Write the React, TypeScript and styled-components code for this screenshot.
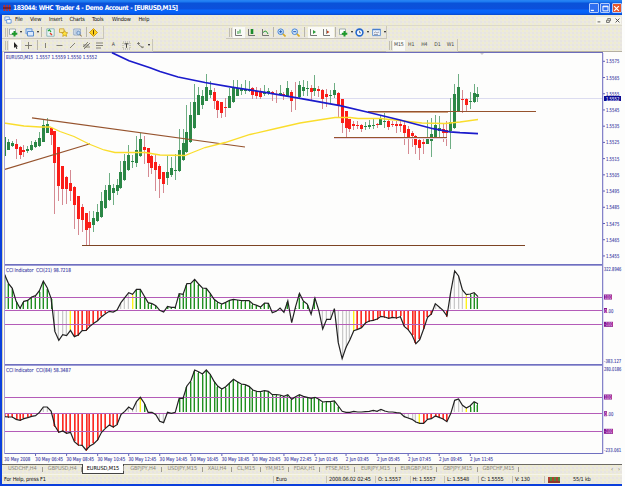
import { Fragment } from 'react'
import type { ReactNode } from 'react'
import styled, { createGlobalStyle } from 'styled-components'

const GlobalStyle = createGlobalStyle`
  * {
    box-sizing: border-box;
  }

  body {
    margin: 0;
    background: #fdfdfc;
    overflow: hidden;
  }
`

const NAVY = '#3c3ca4'
const PURPLE = '#b45cb8'
const MAROON = '#84158c'
const UP = '#2b8746'
const DOWN = '#fb1d18'

/* ---------- data ---------- */

// every bar of the chart is STEP px from the previous one
const FIRST_X = 4.5
const STEP = 3.881
const barX = (i: number) => Math.floor(FIRST_X + STEP * i)

// high, body top, body bottom, low (in thirds of a pixel), d = down bar
const CANDLES = `262 262 317 317 u|266 276 299 300 u|272 280 288 292 u|267 283 298 326 d|288 290 315 326 d|285 301 305 321 d|287 297 303 310 u|272 286 300 303 u|270 277 292 294 u|247 264 287 290 u|207 225 275 277 u|205 221 250 250 u|230 233 255 284 d|243 244 340 493 d|291 291 408 453 d|347 349 416 464 d|378 381 416 463 d|359 399 422 453 d|408 410 465 537 d|438 438 507 555 d|462 471 509 545 d|488 490 540 585 d|482 515 533 585 d|482 504 524 545 u|463 486 514 516 u|426 453 501 504 u|404 420 475 477 u|369 405 449 452 u|403 414 428 464 u|388 405 422 434 u|332 366 413 416 u|313 333 389 392 u|285 315 361 363 u|315 333 337 353 u|257 300 338 352 u|250 267 317 320 u|257 291 300 341 d|293 295 339 380 d|315 317 355 373 d|315 335 361 424 d|343 347 388 443 d|366 367 403 430 d|318 366 383 405 u|322 353 376 380 u|311 360 364 390 u|238 300 362 365 u|238 279 330 333 u|165 246 306 310 u|155 195 277 280 u|101 155 234 237 u|112 135 195 196 u|119 138 165 176 u|72 112 154 154 u|94 121 134 143 u|115 126 154 178 d|150 152 180 205 d|156 157 188 203 d|145 171 175 200 d|115 138 174 175 u|91 113 156 158 u|91 113 137 139 u|103 117 123 134 u|90 119 123 131 u|92 118 122 126 u|112 114 134 146 d|110 123 137 148 d|113 125 141 147 d|105 126 132 137 u|113 124 128 135 u|124 127 132 153 d|120 131 135 158 d|105 129 134 138 u|125 131 137 150 d|92 115 138 139 u|120 125 153 187 d|96 140 145 181 d|92 105 142 145 u|90 111 123 137 u|92 115 118 137 u|106 114 127 150 d|76 114 123 138 u|107 117 124 142 d|117 121 146 176 d|116 132 141 170 d|121 134 138 163 u|98 121 134 145 u|127 129 166 205 d|146 147 219 248 d|183 184 234 260 d|206 208 238 247 d|212 221 229 239 d|213 224 228 236 d|223 225 238 245 d|216 228 232 240 u|211 226 230 236 u|208 225 228 237 u|220 223 226 235 d|198 208 224 224 u|188 212 216 233 u|211 213 230 240 d|212 221 225 231 d|212 223 228 248 d|211 222 228 245 d|217 226 248 284 d|228 236 267 311 d|243 249 258 291 d|255 257 285 311 d|268 270 293 330 d|265 277 282 312 d|210 261 282 282 u|203 252 272 322 u|195 225 262 264 u|198 234 244 260 u|220 238 249 277 d|212 240 249 289 d|144 217 243 298 u|101 131 233 236 u|72 112 185 186 u|120 147 150 190 d|145 147 164 184 d|126 153 156 177 u|101 128 155 158 u|111 133 142 157 u`
  .split('|')
  .map((row) => {
    const [high, top, bottom, low, dir] = row.split(' ')
    return {
      high: 50 + Number(high) / 3,
      top: 50 + Number(top) / 3,
      bottom: 50 + Number(bottom) / 3,
      low: 50 + Number(low) / 3,
      down: dir === 'd',
    }
  })

const CCI_21 = [
  43, 70, 85, 124, 145, 124, 121, 111, 107, 92, 63, 83, 115, 215, 241, 224, 227,
  211, 230, 225, 212, 211, 199, 190, 182, 170, 161, 154, 156, 150, 128, 113, 98,
  103, 88, 88, 108, 128, 131, 137, 151, 156, 139, 142, 142, 101, 103, 71, 70, 58,
  72, 84, 85, 100, 118, 127, 132, 127, 121, 118, 120, 122, 122, 122, 132, 136,
  141, 129, 130, 158, 154, 144, 157, 123, 188, 140, 100, 123, 132, 163, 115, 152,
  207, 178, 178, 146, 248, 296, 262, 239, 212, 208, 203, 189, 183, 181, 177, 169,
  171, 175, 172, 174, 170, 199, 209, 225, 251, 239, 207, 172, 162, 131, 141, 151,
  168, 95, 33, 48, 90, 104, 102, 98, 110,
]

const CCI_84 = [
  470, 471, 471, 478, 481, 476, 473, 469, 467, 457, 441, 441, 453, 498, 517, 513,
  520, 517, 545, 555, 556, 570, 558, 551, 540, 517, 505, 495, 501, 494, 464, 454,
  441, 449, 425, 412, 429, 457, 457, 464, 484, 488, 457, 460, 457, 415, 415, 378,
  363, 330, 335, 342, 330, 343, 364, 379, 387, 380, 369, 358, 365, 372, 374, 379,
  390, 394, 395, 392, 394, 404, 404, 405, 409, 404, 418, 410, 404, 409, 412, 415,
  412, 418, 426, 425, 425, 423, 438, 454, 457, 457, 454, 456, 456, 455, 454, 451,
  454, 448, 453, 456, 456, 458, 459, 470, 474, 478, 486, 490, 490, 478, 476, 468,
  472, 477, 485, 460, 421, 417, 436, 444, 437, 425, 431,
]

// [last bar of the run, colour]
type Run = [number, string]

const GREEN = '#1f8f1f'
const RED = '#fb2a22'
const GRAY = '#c9c9c9'
const YELLOW = '#fdf21a'

const RUNS_21: Run[] = [
  [12, GREEN],
  [16, GRAY],
  [17, YELLOW],
  [29, RED],
  [32, GRAY],
  [33, YELLOW],
  [80, GREEN],
  [89, GRAY],
  [90, YELLOW],
  [110, RED],
  [113, GRAY],
  [114, RED],
  [118, GRAY],
  [119, YELLOW],
  [122, GREEN],
]

const RUNS_84: Run[] = [
  [8, RED],
  [12, GRAY],
  [30, RED],
  [34, GRAY],
  [35, YELLOW],
  [36, GREEN],
  [44, GRAY],
  [87, GREEN],
  [106, GRAY],
  [107, YELLOW],
  [114, RED],
  [118, GRAY],
  [119, YELLOW],
  [122, GREEN],
]

const PRICES = [
  '1.5575', '1.5565', '1.5555', '1.5545', '1.5535', '1.5525', '1.5515',
  '1.5505', '1.5495', '1.5485', '1.5475', '1.5465', '1.5455',
]

const TIMES = [
  '30 May 2008', '30 May 06:45', '30 May 08:45', '30 May 10:45',
  '30 May 12:45', '30 May 14:45', '30 May 16:45', '30 May 18:45',
  '30 May 20:45', '30 May 22:45', '2 Jun 01:45', '2 Jun 03:45',
  '2 Jun 05:45', '2 Jun 07:45', '2 Jun 09:45', '2 Jun 11:45',
]

const MENU = [
  { label: 'File', width: 15 },
  { label: 'View', width: 19 },
  { label: 'Insert', width: 20.5 },
  { label: 'Charts', width: 22.5 },
  { label: 'Tools', width: 20 },
  { label: 'Window', width: 26.5 },
  { label: 'Help', width: 20 },
]

const TABS = [
  { label: 'USDCHF,H4', width: 40.5 },
  { label: 'GBPUSD,H4', width: 39.5 },
  { label: 'EURUSD,M15', width: 42, active: true },
  { label: 'GBPJPY,H4', width: 38 },
  { label: 'USDJPY,M15', width: 40.5 },
  { label: 'XAU,H4', width: 29 },
  { label: 'CL,M15', width: 29 },
  { label: 'YM,M15', width: 28.5 },
  { label: 'FDAX,H1', width: 31 },
  { label: 'FTSE,M15', width: 35 },
  { label: 'EURJPY,M15', width: 41 },
  { label: 'EURGBP,M15', width: 41 },
  { label: 'GBPJPY,M15', width: 41 },
  { label: 'GBPCHF,M15', width: 41 },
]

const STATUS = [
  { label: 'For Help, press F1', width: 272 },
  { label: 'Euro', width: 53 },
  { label: '2008.06.02 02:45', width: 49 },
  { label: 'O: 1.5557', width: 34.5 },
  { label: 'H: 1.5557', width: 34.5 },
  { label: 'L: 1.5548', width: 34 },
  { label: 'C: 1.5555', width: 34 },
  { label: 'V: 130', width: 32 },
]

/* ---------- window ---------- */

const Window = styled.div`
  display: flex;
  flex-direction: column;
  width: 622px;
  height: 486px;
  border-left: 2px solid #0b3fdc;
  border-bottom: 2px solid #0b3fdc;
  background: #fdfdfc;
  font-family: 'DejaVu Sans Condensed', 'DejaVu Sans', sans-serif;
  font-stretch: condensed;
  font-size: 5.6px;
  line-height: 1;
  color: #222;
  white-space: pre;
`

const TitleBar = styled.header`
  display: flex;
  align-items: center;
  height: 15px;
  flex: none;
  margin-left: -2px;
  padding: 1px 0.5px 0 3px;
  background: linear-gradient(
    #2a86f4 0,
    #1a78f0 2px,
    #0a52d8 3px,
    #0c50dc 9px,
    #0866fa 10px,
    #0460f8 13px,
    #0a48c8 15px
  );
`

const Title = styled.h1`
  flex: 1;
  margin: 0 0 0 2px;
  font-size: 6.6px;
  font-weight: 700;
  letter-spacing: -0.5px;
  word-spacing: 0.5px;
  color: #fff;
`

const CaptionButton = styled.button<{ $color: string }>`
  width: 10px;
  height: 10px;
  margin-left: 1.5px;
  padding: 0;
  border: 1px solid #b4cdfa;
  border-radius: 1px;
  background: ${(props) => props.$color};
  display: flex;
  align-items: center;
  justify-content: center;
`

const dither = `
  background-color: #ebe9df;
  background-image:
    radial-gradient(circle at 1px 1px, rgba(252, 246, 150, 0.7) 0.5px, transparent 0.8px),
    radial-gradient(circle at 3px 3px, rgba(222, 216, 228, 0.8) 0.5px, transparent 0.8px);
  background-size: 4px 4px;
`

const MenuBar = styled.nav`
  display: flex;
  align-items: center;
  height: 10px;
  flex: none;
  padding: 0 1px 0 2px;
  ${dither}
`

const MenuItem = styled.span<{ $width: number }>`
  width: ${(props) => props.$width}px;
  letter-spacing: -0.2px;
  color: #111;
`

const MenuIcon = styled.span`
  display: flex;
  width: 11px;
`

const Spacer = styled.span`
  flex: 1;
`

const MdiButtons = styled.span`
  display: flex;
  gap: 4px;
  padding: 1px;
  background: #f7f6ee;
`

const ToolArea = styled.div`
  flex: none;
  border-top: 1px solid #dcd9cc;
  border-bottom: 1px solid #b5b0a2;
  height: 27px;
  ${dither}
`

const ToolRow = styled.div`
  display: flex;
  height: 13px;
`

const ToolGroup = styled.div<{ $width: number; $left?: number }>`
  display: flex;
  align-items: center;
  width: ${(props) => props.$width}px;
  margin-left: ${(props) => props.$left ?? 0}px;
  border: solid #c9c6ba;
  border-width: 0 1px 1px 0;
`

const Grip = styled.span`
  width: 3px;
  height: 9px;
  margin: 0 1px 0 3px;
  border: solid #c0bdb0;
  border-width: 0 1px;
`

const Tool = styled.span<{ $width?: number; $pressed?: boolean }>`
  display: flex;
  align-items: center;
  justify-content: center;
  width: ${(props) => props.$width ?? 13.5}px;
  height: 11px;
  font-size: 5.2px;
  letter-spacing: -0.2px;
  color: #444;
  background: ${(props) => (props.$pressed ? '#fafaf6' : 'transparent')};
`

const Rule = styled.span`
  width: 1px;
  height: 10px;
  background: #b9b6aa;
`

const DropArrow = styled.span`
  border: solid transparent;
  border-width: 2px 1.5px 0;
  border-top-color: #111;
`

const Charts = styled.main`
  display: flex;
  flex-direction: column;
  flex: none;
  padding-left: 2px;
  background: #fdfdfc;
  box-shadow: inset 1px 0 #d2cdb4;

  svg {
    display: block;
  }
`

const TabBar = styled.div`
  display: flex;
  height: 10px;
  flex: none;
  border-top: 1px solid #6c6a64;
  ${dither}
`

const Tab = styled.span<{ $width: number; $active?: boolean }>`
  display: flex;
  position: relative;
  align-items: center;
  justify-content: center;
  width: ${(props) => props.$width}px;
  height: ${(props) => (props.$active ? 10 : 8)}px;
  margin-top: ${(props) => (props.$active ? -1 : 0)}px;
  letter-spacing: -0.1px;
  color: ${(props) => (props.$active ? '#000' : '#8c897e')};
  background: ${(props) => (props.$active ? '#fff' : 'transparent')};
  border: solid ${(props) => (props.$active ? '#444' : 'transparent')};
  border-width: 0 1px 1px;

  &::after {
    content: '';
    position: absolute;
    right: -1px;
    top: 2px;
    height: 5px;
    border-right: 1px solid #a19e92;
  }
`

const TabArrows = styled.span`
  display: flex;
  align-items: center;
  gap: 5px;
  margin-left: auto;
  padding-right: 2px;
  color: #777;
`

const StatusBar = styled.footer`
  display: flex;
  align-items: center;
  flex: 1;
  border-top: 1px solid #f6f4ea;
  ${dither}
`

const StatusCell = styled.span<{ $width: number }>`
  width: ${(props) => props.$width}px;
  padding-left: 2px;
  line-height: 7px;
  letter-spacing: -0.2px;
  color: #111;
  border-right: 1px solid #c4c1b4;
`

const Traffic = styled.span`
  margin-left: 13px;
  letter-spacing: -0.2px;
`

const Signal = styled.span`
  width: 12px;
  height: 6px;
  margin-left: 3px;
  background: repeating-linear-gradient(90deg, #b04030 0 2px, #4e8a3c 2px 4px);
  border-bottom: 2px solid #8c3a2c;
`

/* ---------- icons ---------- */

function Glyph({ children, size = 9 }: { children: ReactNode; size?: number }) {
  return (
    <svg width={size} height={size} viewBox="0 0 9 9" fill="none">
      {children}
    </svg>
  )
}

const NewChartIcon = () => (
  <Glyph>
    <path d="M.5 1h6v5.500h-6z" fill="#fff" stroke="#8a9a9a" strokeWidth=".8" />
    <path d="M5.500 3v5.500M2.800 5.800h5.500" stroke="#1d9a2a" strokeWidth="2" />
  </Glyph>
)

const ProfilesIcon = () => (
  <Glyph>
    <path d="M1 .8h6v5H1z" fill="#cfe2fa" stroke="#6a9ad8" />
    <path d="M2.500 3.500h6v4.500h-6z" fill="#dceafc" stroke="#5a8ccc" />
  </Glyph>
)

const MarketIcon = () => (
  <Glyph>
    <path d="M.8 .8h7.400v7.400H.8z" fill="#e8f6f4" stroke="#7faab0" strokeWidth=".8" />
    <path d="m2 3 1.500-1.200L5 4" stroke="#20a038" strokeWidth="1.200" />
    <path d="m4 5 2 2" stroke="#e04030" strokeWidth="1.500" />
  </Glyph>
)

const NavigatorIcon = () => (
  <Glyph>
    <path d="M.5 4.500V.8h4.500v3.700z" fill="#fbe992" stroke="#c8a030" strokeWidth=".8" />
    <path d="m5.700 2.500 1 1.900 2.100.3-1.500 1.500.4 2.200-2-1-2 1 .4-2.200L2.600 4.700l2.100-.3z" fill="#ffe23c" stroke="#b88c10" strokeWidth=".6" />
  </Glyph>
)

const TerminalIcon = () => (
  <Glyph>
    <path d="M.8 1h6.500v6H.8z" fill="#e0ecf8" stroke="#8098b8" strokeWidth=".8" />
    <path d="M2 3h4M2 5h3" stroke="#7c94b4" strokeWidth=".7" />
    <circle cx="5.500" cy="5" r="1.700" fill="#bcd8f4" stroke="#5880b0" strokeWidth=".7" />
    <path d="m7 6.500 1.700 2" stroke="#806030" />
  </Glyph>
)

const OrderIcon = () => (
  <Glyph>
    <path d="M4.500.5 8.500 4.500l-4 4-4-4z" fill="#ffd21c" stroke="#c08a00" strokeWidth=".8" />
    <path d="M4.500 2.200v4.300" stroke="#5c4200" />
  </Glyph>
)

const AxisIcon = ({ children }: { children: ReactNode }) => (
  <Glyph>
    <path d="M1.500 1v6.500H8" stroke="#666" strokeWidth=".9" />
    {children}
  </Glyph>
)

const ZoomIcon = ({ plus }: { plus?: boolean }) => (
  <Glyph>
    <path d="m5.500 5.500 3 3" stroke="#d8a820" strokeWidth="1.600" />
    <circle cx="3.700" cy="3.700" r="2.800" fill="#d4e8fc" stroke="#4a88d4" />
    <path d={plus ? 'M2.200 3.700h3M3.700 2.200v3' : 'M2.200 3.700h3'} stroke="#2058b0" />
  </Glyph>
)

const ClockIcon = () => (
  <Glyph>
    <circle cx="4.500" cy="4.500" r="3.400" fill="#eef6ff" stroke="#2668cc" strokeWidth="1.600" />
    <path d="M4.500 2.800v2h1.500" stroke="#444" strokeWidth=".7" />
  </Glyph>
)

const TemplateIcon = () => (
  <Glyph>
    <path d="M.6 1.200h7.800v6.400H.6z" fill="#eef4fc" stroke="#6c98d0" />
    <path d="M.6 1.600h7.800" stroke="#4a80cc" strokeWidth="1.200" />
    <path d="m2 5 1.500-1 1.500 1 2-1M2 6.500h4" stroke="#667" strokeWidth=".6" />
  </Glyph>
)

const CursorIcon = () => (
  <Glyph>
    <path d="M3 1v6l1.400-1.200L5.400 8l1-.5-1-2H7z" fill="#222" />
  </Glyph>
)

const LineIcon = ({ d }: { d: string }) => (
  <Glyph>
    <path d={d} stroke="#77756c" strokeWidth=".9" />
  </Glyph>
)

/* ---------- chart pieces ---------- */

type LabelProps = {
  x: number
  y: number
  width: number
  fill?: string
  children: string
}

// y is the vertical centre of the capitals
function Label({ x, y, width, fill = NAVY, children }: LabelProps) {
  return (
    <text
      x={x}
      y={y + 2}
      fontSize="5.4"
      fill={fill}
      stroke={fill}
      strokeWidth=".1"
      textLength={width}
      lengthAdjust="spacingAndGlyphs"
      xmlSpace="preserve"
    >
      {children}
    </text>
  )
}

function Frame({ top, bottom }: { top: number; bottom: number }) {
  return (
    <g shapeRendering="crispEdges">
      <path d={`M4.500 ${top}V${bottom}`} stroke="#a5a3dc" />
      <path d={`M602.500 ${top}V${bottom}`} stroke="#8583c8" />
      <path d={`M603.500 ${top}V${bottom}`} stroke="#dddcf2" />
    </g>
  )
}

function PricePanel() {
  return (
    <svg width="618" height="213" viewBox="4 52 618 213">
      <g shapeRendering="crispEdges">
        <path d="M4 52.500H603" stroke="#6c6cbc" />
        <path d="M4 98.500H602" stroke="#dcdcf0" />
        <path d="M4 264.500H603" stroke="#6f6fbf" />
      </g>
      <path d="M480 53h4l-2 2z" fill="#ccc" />
      <g shapeRendering="crispEdges">
        {CANDLES.map((c, i) => {
          const x = barX(i)
          return (
            <Fragment key={i}>
              <rect
                x={x}
                y={c.high}
                width="1"
                height={c.low - c.high}
                fill={c.down ? '#d58a92' : '#6fae84'}
              />
              <rect
                x={x - 1}
                y={c.top}
                width="3"
                height={Math.max(1, c.bottom - c.top)}
                fill={c.down ? DOWN : UP}
              />
            </Fragment>
          )
        })}
      </g>
      <g fill="none" stroke="#96532d" strokeWidth="1.200">
        <path d="M32 117.800 245 147" />
        <path d="M4 169.700 90 143.800" />
      </g>
      <g fill="none" shapeRendering="crispEdges">
        <path d="M368 112.500h80" stroke="#cfa283" />
        <path d="M368 111.500h168" stroke="#96532d" />
        <path d="M334 137.500h113" stroke="#96532d" />
        <path d="M334 138.500h113" stroke="#e6cfe0" />
        <path d="M82 245.500h443" stroke="#7d4424" />
      </g>
      <path
        d="M4 123 24 126 40 127 50 127 60 131.500 74 136.500 89 144 104 150 115 152.500 145 152.500 160 155 185 155.500 190 153.500 205 147.500 225 142.500 250 134.500 276 128.500 300 123 322 119.500 335 117.500 350 117.500 358 118.500 380 118.500 400 120.500 422 123 445 123.500 460 122 478 119.500"
        fill="none"
        stroke="#fadd2c"
        strokeWidth="1.300"
      />
      <path
        d="M112 52.700 129 60.700 150 67.700 160 71.500 178 77 205 82.500 233 87.300 265 92.300 300 98.300 340 105.700 367 112 400 120 433 128.700 450 131.800 460 132.700 478 133.700"
        fill="none"
        stroke="#1b1bcb"
        strokeWidth="1.700"
      />
      <Frame top={53} bottom={265} />
      {PRICES.map((price, i) => (
        <Fragment key={price}>
          <path d={`M603 ${61.300 + i * 16.220}h2`} stroke={NAVY} strokeWidth=".8" />
          <Label x={606} y={61.300 + i * 16.220} width={13.300}>
            {price}
          </Label>
        </Fragment>
      ))}
      <rect x="604" y="96" width="17" height="5" fill="#0c0c94" />
      <Label x={606} y={98.500} width={13.300} fill="#e6e6ff">
        1.5552
      </Label>
      <Label x={6} y={56.700} width={91}>
        {'EURUSD,M15  1.5557 1.5559 1.5550 1.5552'}
      </Label>
    </svg>
  )
}

type CciPanelProps = {
  top: number
  height: number
  title: string
  values: number[]
  runs: Run[]
  // +100, 0 and -100
  levels: [number, number, number]
  max: string
  min: string
}

function CciPanel({ top, height, title, values, runs, levels, max, min }: CciPanelProps) {
  const bottom = top + height
  const zero = levels[1]
  const ys = values.map((v) => 260 + v / 3)
  const colorOf = (i: number) => runs.find(([last]) => i <= last)![1]
  const points = ys.map((y, i) => `${FIRST_X + STEP * i},${y}`).join(' ')

  return (
    <svg width="618" height={height} viewBox={`4 ${top} 618 ${height}`}>
      <g shapeRendering="crispEdges">
        <path d={`M4 ${top + 0.5}H603`} stroke="#9c9cd6" />
        <path d={`M4 ${bottom - 0.5}H603`} stroke="#7070c0" />
        {ys.map((y, i) => {
          const above = y < zero
          const color = colorOf(i)
          // short bars near zero are not painted
          if (Math.abs(y - zero) < 2) return null
          if (color === GREEN && !above) return null
          return (
            <Fragment key={i}>
              <rect
                x={barX(i)}
                y={above ? y : zero + 0.5}
                width="1"
                height={above ? zero - 1.5 - y : y - zero}
                fill={color}
              />
              <rect
                x={barX(i) + (i % 3 === 0 ? 1 : -1)}
                y={above ? y + 1 : zero + 0.5}
                width="1"
                height={Math.max(0, above ? zero - 2.5 - y : y - zero - 1)}
                fill={color}
                opacity={color === RED ? 0.65 : color === GRAY ? 0.25 : 0.4}
              />
            </Fragment>
          )
        })}
        {levels.map((y) => (
          <path key={y} d={`M4 ${Math.floor(y) + 0.5}H603`} stroke={PURPLE} />
        ))}
      </g>
      <polyline points={points} fill="none" stroke="#222" strokeWidth="1.200" />
      <Frame top={top} bottom={bottom} />
      <Label x={6} y={top + 5.300} width={65}>
        {title}
      </Label>
      <Label x={604} y={top + 4} width={17.300}>
        {max}
      </Label>
      <rect x="604" y={levels[0] - 2.500} width="8" height="5" fill={MAROON} />
      <Label x={604.500} y={levels[0]} width={7} fill="#e8b8ea">
        100
      </Label>
      <rect x="604" y={zero - 2.500} width="3" height="5" fill={MAROON} />
      <Label x={604.300} y={zero} width={2.600} fill="#e8b8ea">
        0
      </Label>
      <Label x={607.300} y={zero} width={6}>
        .00
      </Label>
      <rect x="604" y={levels[2] - 2.500} width="9" height="5" fill={MAROON} />
      <Label x={604.500} y={levels[2]} width={8} fill="#e8b8ea">
        -100
      </Label>
      <Label x={604} y={bottom - 3.800} width={17.300}>
        {min}
      </Label>
    </svg>
  )
}

function TimeAxis() {
  return (
    <svg width="618" height="10" viewBox="4 454 618 10">
      {TIMES.map((time, i) => (
        <Fragment key={time}>
          {i > 0 && <path d={`M${4.500 + i * 31.050} 454v2`} stroke={NAVY} strokeWidth=".8" />}
          <Label
            x={4.300 + i * 31.050}
            y={459.200}
            width={time.startsWith('2') ? 23 : i === 0 ? 26 : 27.800}
          >
            {time}
          </Label>
        </Fragment>
      ))}
    </svg>
  )
}

/* ---------- app ---------- */

function Toolbars() {
  return (
    <ToolArea>
      <ToolRow>
        <ToolGroup $width={102}>
          <Grip />
          <Tool $width={9}><NewChartIcon /></Tool>
          <Tool $width={5}><DropArrow /></Tool>
          <Tool $width={13}><ProfilesIcon /></Tool>
          <Tool $width={4}><DropArrow /></Tool>
          <Tool $width={3}><Rule /></Tool>
          <Tool $width={14}><MarketIcon /></Tool>
          <Tool $width={13}><NavigatorIcon /></Tool>
          <Tool $width={14}><TerminalIcon /></Tool>
          <Tool $width={5}><Rule /></Tool>
          <Tool $width={9}><OrderIcon /></Tool>
        </ToolGroup>
        <ToolGroup $width={161} $left={122}>
          <Grip />
          <Tool $width={12} $pressed>
            <AxisIcon><path d="M4 3v3M6 1.500v4" stroke="#2a9a3a" /></AxisIcon>
          </Tool>
          <Tool $width={14}>
            <AxisIcon><path d="M5 1v5" stroke="#1c8c2c" strokeWidth="2.600" /></AxisIcon>
          </Tool>
          <Tool>
            <AxisIcon><path d="m2 4.500 2-1.500 1.500.500L7 6" stroke="#2a9a3a" /></AxisIcon>
          </Tool>
          <Tool $width={3}><Rule /></Tool>
          <Tool><ZoomIcon plus /></Tool>
          <Tool><ZoomIcon /></Tool>
          <Tool $width={6}><Rule /></Tool>
          <Tool $width={12} $pressed>
            <AxisIcon><path d="m4 2 3 2-3 2z" fill="#2a9a3a" /></AxisIcon>
          </Tool>
          <Tool $width={14} $pressed>
            <AxisIcon>
              <path d="M4.500 1v5" stroke="#666" strokeWidth=".7" />
              <path d="m5 2.500 2.500 1.500L5 5.500z" fill="#c04020" />
            </AxisIcon>
          </Tool>
          <Tool $width={3}><Rule /></Tool>
          <Tool $width={14}><NewChartIcon /></Tool>
          <Tool $width={3}><DropArrow /></Tool>
          <Tool $width={13}><ClockIcon /></Tool>
          <Tool $width={3}><DropArrow /></Tool>
          <Tool $width={14}><TemplateIcon /></Tool>
          <Tool $width={3}><DropArrow /></Tool>
        </ToolGroup>
      </ToolRow>
      <ToolRow>
        <ToolGroup $width={151}>
          <Grip />
          <Tool $width={12} $pressed><CursorIcon /></Tool>
          <Tool $width={14}><LineIcon d="M4.500 1v7M1 4.500h7" /></Tool>
          <Tool $width={4}><Rule /></Tool>
          <Tool><LineIcon d="M4.500 2v5" /></Tool>
          <Tool><LineIcon d="M1.500 4.500h6" /></Tool>
          <Tool><LineIcon d="m2 7 5-5" /></Tool>
          <Tool><LineIcon d="m1 6 5-5M2 8l6-6M1 4h6M2 6h6" /></Tool>
          <Tool><LineIcon d="M1 2h7M1 4.500h7M1 7h5" /></Tool>
          <Tool>A</Tool>
          <Tool>
            <Glyph>
              <path d="M1 1h7v7H1z" stroke="#888" strokeWidth=".7" strokeDasharray="1 1" />
              <path d="M2.500 2.800h4M4.500 2.800v4" stroke="#444" />
            </Glyph>
          </Tool>
          <Tool><LineIcon d="M1 2.500h3M2.500 1v3M3 4l4 3M5 6h3" /></Tool>
          <Tool $width={3}><DropArrow /></Tool>
        </ToolGroup>
        <ToolGroup $width={72} $left={233}>
          <Grip />
          <Tool $width={12} $pressed>M15</Tool>
          <Tool>H1</Tool>
          <Tool>H4</Tool>
          <Tool>D1</Tool>
          <Tool>W1</Tool>
        </ToolGroup>
      </ToolRow>
    </ToolArea>
  )
}

function App() {
  return (
    <>
      <GlobalStyle />
      <Window>
        <TitleBar>
          <Glyph size={8}>
            <path d="M1.500 1v7M4.500 1v7M7.500 1v7" stroke="#c03028" strokeWidth="1.800" />
            <path d="M0 4.500h9" stroke="#701818" strokeWidth="1.500" />
          </Glyph>
          <Title>183044: WHC Trader 4 - Demo Account - [EURUSD,M15]</Title>
          <CaptionButton $color="#2f6ff0">
            <Glyph size={7}><path d="M1 7h4" stroke="#fff" strokeWidth="1.600" /></Glyph>
          </CaptionButton>
          <CaptionButton $color="#2f6ff0">
            <Glyph size={7}><path d="M1.200 1.500h6.500v6H1.200zM1 2.200h7" stroke="#fff" strokeWidth="1.200" /></Glyph>
          </CaptionButton>
          <CaptionButton $color="#e4552c">
            <Glyph size={7}><path d="m1.500 1.500 6 6M7.500 1.500l-6 6" stroke="#fff" strokeWidth="1.600" /></Glyph>
          </CaptionButton>
        </TitleBar>

        <MenuBar>
          <MenuIcon>
            <Glyph size={8}>
              <path d="M1 1h5v4H1z" fill="#e8f2ff" stroke="#6c9ce0" />
              <path d="M3 4h5v4H3z" fill="#fff" stroke="#5a90dc" />
            </Glyph>
          </MenuIcon>
          {MENU.map((item) => (
            <MenuItem key={item.label} $width={item.width}>
              {item.label}
            </MenuItem>
          ))}
          <Spacer />
          <MdiButtons>
            <Glyph size={5}><path d="M1 7h5" stroke="#444" strokeWidth="1.500" /></Glyph>
            <Glyph size={5}><path d="M1 4h5v4H1zM3 3V1h5v4H7" stroke="#444" strokeWidth="1.300" /></Glyph>
            <Glyph size={5}><path d="m1 1 7 7M8 1 1 8" stroke="#444" strokeWidth="1.600" /></Glyph>
          </MdiButtons>
        </MenuBar>

        <Toolbars />

        <Charts>
          <PricePanel />
          <CciPanel
            top={265}
            height={100}
            title={'CCI Indicator  CCI(21) 98.7218'}
            values={CCI_21}
            runs={RUNS_21}
            levels={[297, 310.500, 324.300]}
            max="322.8946"
            min="-383.127"
          />
          <CciPanel
            top={365}
            height={89}
            title={'CCI Indicator  CCI(84) 58.3487'}
            values={CCI_84}
            runs={RUNS_84}
            levels={[397, 413.700, 431.300]}
            max="280.0186"
            min="-233.061"
          />
          <TimeAxis />
        </Charts>

        <TabBar>
          {TABS.map((tab) => (
            <Tab key={tab.label} $width={tab.width} $active={tab.active}>
              {tab.label}
            </Tab>
          ))}
          <TabArrows>
            <span>‹</span>
            <span>›</span>
          </TabArrows>
        </TabBar>

        <StatusBar>
          {STATUS.map((cell) => (
            <StatusCell key={cell.label} $width={cell.width}>
              {cell.label}
            </StatusCell>
          ))}
          <Signal />
          <Traffic>55/1 kb</Traffic>
        </StatusBar>
      </Window>
    </>
  )
}

export default App
